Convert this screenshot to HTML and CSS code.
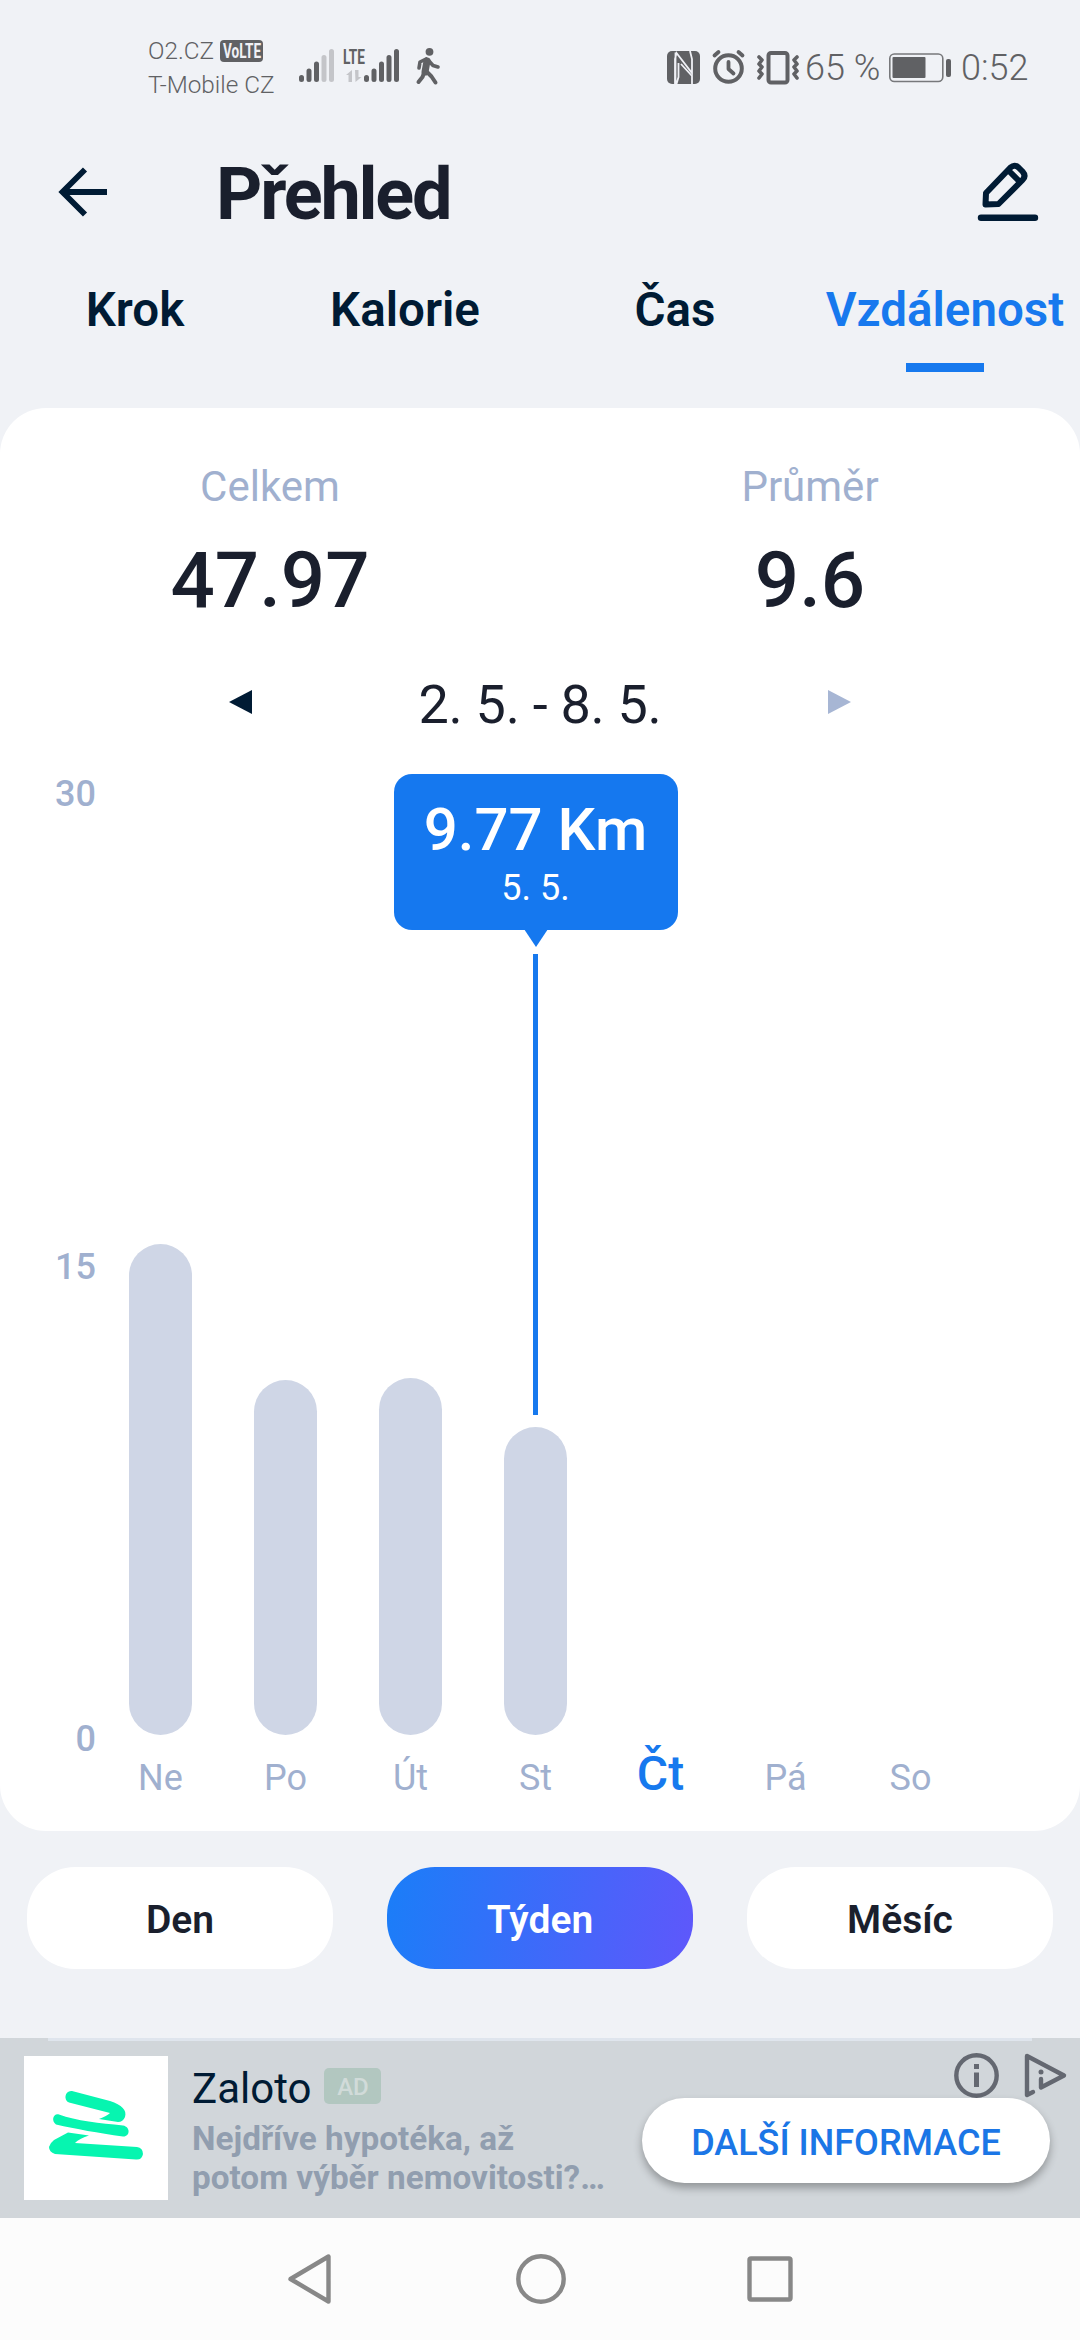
FILE: index.html
```html
<!DOCTYPE html>
<html lang="cs">
<head>
    <meta charset="UTF-8">
    <meta name="viewport" content="width=device-width, initial-scale=1.0">
    <title>Přehled</title>
    <link rel="stylesheet" href="styles.css">
</head>
<body>
    <!-- Status bar -->
    <div class="status-bar">
        <div class="carriers">
            <p>O2.CZ <span class="volte"><svg width="38" height="22" viewBox="0 0 38 22"><text x="0" y="18" textLength="38" lengthAdjust="spacingAndGlyphs">VoLTE</text></svg></span></p>
            <p>T-Mobile CZ</p>
        </div>
        <svg class="signals" width="146" height="42" viewBox="298 44 146 42">
            <g stroke="#606164" stroke-width="5" stroke-linecap="round">
                <path d="M301.5 77.5v2M309 71v8.500M316.500 64v15.500"/>
                <path d="M324 57.500v22M331.500 51.500v28" stroke="#c4c5c9"/>
                <path d="M366.500 77.500v2M374 71v8.500M381.500 64v15.500M389 57.500v22M396.500 51.500v28"/>
            </g>
            <text class="lte" x="343" y="64" textLength="22" lengthAdjust="spacingAndGlyphs">LTE</text>
            <path d="M346 75l6-5v12h-3.500v-7zM355 70h3.500v7h3l-6 5z" fill="#c4c5c9"/>
            <circle cx="429.500" cy="51.800" r="3.900" fill="#606164"/>
            <g fill="none" stroke="#606164" stroke-linecap="round" stroke-linejoin="round">
                <path d="M427 61l-2 11" stroke-width="7"/>
                <path d="M426 59l-6 3-1 6M429 61l4 4.500 5 1.500" stroke-width="3.600"/>
                <path d="M424 73l-1.500 4-4 5M427 72l4.500 4.500 4 6" stroke-width="4"/>
            </g>
        </svg>
        <div class="status-right">
            <svg width="136" height="38" viewBox="665 48 136 38">
                <rect x="666" y="50" width="33" height="33" rx="5" fill="#606164"/>
                <path d="M674 83V58l1.500-6L691 72V58l-2-8M674.500 51.500v28l1 4M677.500 62v14l-2 7M680 63l11 12v8" fill="none" stroke="#f0f1f6" stroke-width="1.800"/>
                <g fill="none" stroke="#606164" stroke-width="4" stroke-linecap="round" stroke-linejoin="round">
                    <circle cx="727.500" cy="67.500" r="13.300"/>
                    <path d="M727.500 61v7l5 4.500M713.500 54.500l4-3.500M741.500 54.500l-4-3.500" stroke-width="3.800"/>
                    <rect x="767.500" y="52" width="19" height="29.500" rx="2.500"/>
                    <path d="M758 56l3 3-3 4 3 3-3 4 3 3-3 4M796 56l-3 3 3 4-3 3 3 4-3 3 3 4" stroke-width="3.600"/>
                </g>
            </svg>
            <span class="percent">65 %</span>
            <svg class="battery" width="62" height="30" viewBox="0 0 62 30">
                <rect x=".8" y="1" width="53" height="27.500" rx="4.500" fill="none" stroke="#77787b" stroke-width="1.600"/>
                <rect x="3.500" y="4" width="33" height="21" rx="1" fill="#606164"/>
                <rect x="57" y="6" width="5" height="18" rx="2" fill="#606164"/>
            </svg>
            <span class="clock">0:52</span>
        </div>
    </div>

    <!-- Header -->
    <div class="header">
        <svg class="back" width="50" height="50" viewBox="0 0 50 50"><path d="M26 2.500L3.500 25 26 47.500M4 25h44" fill="none" stroke="#001b34" stroke-width="5.800"/></svg>
        <h1>Přehled</h1>
        <svg class="edit" width="60" height="60" viewBox="978 162 60 60">
            <g fill="none" stroke="#001b34" stroke-linecap="round" stroke-linejoin="round">
                <path d="M985.500 204.500l.5-11.500L1010.500 167.500q4-3.500 8 0l4 4q4 4.500 0 8.500L998.500 204zM1008.500 170.500l10.500 10.500" stroke-width="6"/>
                <path d="M981 217.800h54" stroke-width="6.400"/>
            </g>
        </svg>
    </div>

    <div class="tabs">
        <div class="tab">Krok</div>
        <div class="tab">Kalorie</div>
        <div class="tab">Čas</div>
        <div class="tab active">Vzdálenost</div>
    </div>

    <!-- Chart card -->
    <div class="card">
        <div class="totals">
            <div class="total">
                <p class="label">Celkem</p>
                <p class="value">47.97</p>
            </div>
            <div class="total">
                <p class="label">Průměr</p>
                <p class="value">9.6</p>
            </div>
        </div>
        <div class="period">
            <svg width="23" height="24" viewBox="0 0 23 24"><path d="M23 0v24L0 12z" fill="#001b34"/></svg>
            <span>2. 5. - 8. 5.</span>
            <svg width="23" height="24" viewBox="0 0 23 24"><path d="M0 0v24l23-12z" fill="#a7b6d4"/></svg>
        </div>
        <div class="chart">
            <div class="axis">
                <span>30</span>
                <span>15</span>
                <span>0</span>
            </div>
            <div class="plot">
                <div class="bars">
                    <div class="col"><div class="bar" style="height: 491.5px"></div></div>
                    <div class="col"><div class="bar" style="height: 355px"></div></div>
                    <div class="col"><div class="bar" style="height: 357.5px"></div></div>
                    <div class="col">
                        <div class="tooltip">
                            <p class="km">9.77 Km</p>
                            <p class="date">5. 5.</p>
                        </div>
                        <div class="pointer"></div>
                        <div class="bar" style="height: 308px"></div>
                    </div>
                    <div class="col"></div>
                    <div class="col"></div>
                    <div class="col"></div>
                </div>
                <div class="days">
                    <span>Ne</span>
                    <span>Po</span>
                    <span>Út</span>
                    <span>St</span>
                    <span class="today">Čt</span>
                    <span>Pá</span>
                    <span>So</span>
                </div>
            </div>
        </div>
    </div>

    <div class="ranges">
        <button class="range">Den</button>
        <button class="range selected">Týden</button>
        <button class="range">Měsíc</button>
    </div>

    <!-- Ad banner -->
    <div class="ad">
        <svg class="ad-logo" width="144" height="144" viewBox="0 0 144 144">
            <rect width="144" height="144" fill="#fff"/>
            <g fill="#06f5b0">
                <path d="M48 35L86 45C98 49 103 54 101 61Q99 66 94 66L75 63Q83 60 86 57L45 46.500C39 44 41 34 48 35Z"/>
                <path d="M35 58.500C52 65 76 67 99 69.500C107 71 106 81 99 80.500C74 77 52 73 32 68.500C27 65 29 57 35 58.500Z"/>
                <path d="M44 76.500L65 79.500Q56 82 51 87L113 91Q119 92 119 98 118 104 112 103.500L31 98Q25 96 25 91 26 87 30 84Z"/>
            </g>
        </svg>
        <div class="ad-text">
            <div class="ad-title">Zaloto <span class="ad-badge">AD</span></div>
            <p>Nejdříve hypotéka, až<br>potom výběr nemovitosti?…</p>
        </div>
        <div class="ad-side">
            <svg class="ad-icons" width="112" height="46" viewBox="954 2053 112 46">
                <g fill="none" stroke="#646871" stroke-width="4.400" stroke-linejoin="round" stroke-linecap="round">
                    <circle cx="976.500" cy="2075.500" r="20.200"/>
                    <path d="M1033 2092l-6 3v-39l37 19.500-23 12V2079"/>
                </g>
                <path d="M974 2064h5v5h-5zM974 2072.500h5V2087h-5z" fill="#646871"/>
                <circle cx="1041" cy="2072" r="2.500" fill="#646871"/>
            </svg>
            <button class="cta">DALŠÍ INFORMACE</button>
        </div>
    </div>

    <!-- Android navigation -->
    <div class="nav-bar">
        <svg width="508" height="54" viewBox="285 2252 508 54">
            <g fill="none" stroke="#888" stroke-width="4.400" stroke-linejoin="round">
                <path d="M289.500 2279l38-22.500v45z"/>
                <circle cx="540" cy="2279" r="22.700"/>
                <rect x="748.500" y="2258.500" width="41" height="41" rx="1.500"/>
            </g>
        </svg>
    </div>
</body>
</html>
```
FILE: styles.css
```css
/* Basic reset */
* {
    margin: 0;
    padding: 0;
    box-sizing: border-box;
}

body {
    font-family: Roboto, sans-serif;
    background-color: #f0f2f6;
    color: #1a1f2d;
    width: 1080px;
    height: 2340px;
    display: flex;
    flex-direction: column;
    overflow: hidden;
}

svg {
    display: block;
    flex-shrink: 0;
    overflow: visible;
}

button {
    border: none;
    font-family: inherit;
}

/* Status bar */
.status-bar {
    display: flex;
    height: 130px;
    padding: 34px 50px 0 148px;
    color: #606164;
}

.carriers {
    width: 150px;
    font-size: 24.3px;
    font-weight: 300;
    line-height: 34px;
    white-space: nowrap;
}

.carriers p {
    display: flex;
    align-items: center;
    gap: 6px;
}

.volte {
    height: 22px;
    padding: 0 2.5px;
    border-radius: 4px;
    background-color: #606164;
}

.volte text {
    font-size: 20px;
    font-weight: 700;
    fill: #f0f1f6;
}

.signals {
    margin-top: 10px;
}

.lte {
    font-size: 21px;
    font-weight: 700;
    fill: #606164;
}

.status-right {
    display: flex;
    align-items: center;
    height: 68px;
    margin-left: auto;
    font-size: 36px;
    font-weight: 300;
}

.percent {
    width: 84px;
    margin-left: 3px;
    white-space: nowrap;
}

.battery {
    margin-right: 10px;
}

.clock {
    width: 69px;
    white-space: nowrap;
}

/* Header */
.header {
    display: flex;
    align-items: center;
    height: 124px;
    padding: 0 42px 0 59px;
}

.header h1 {
    font-size: 72px;
    font-weight: 700;
    letter-spacing: -2.2px;
    line-height: 84px;
    margin-left: 107px;
    padding-top: 5px;
}

.edit {
    margin-left: auto;
}

/* Tabs */
.tabs {
    display: flex;
    height: 154px;
    padding-top: 28px;
}

.tab {
    width: 270px;
    font-size: 47.5px;
    font-weight: 600;
    line-height: 56px;
    text-align: center;
    color: #001b34;
}

.tab.active {
    color: #1779ee;
}

.tab.active::after {
    content: "";
    display: block;
    width: 78px;
    height: 9px;
    margin: 25px auto 0;
    background-color: #1779ee;
}

/* Card */
.card {
    height: 1423px;
    padding-top: 54px;
    background-color: #fff;
    border-radius: 46px;
}

.totals {
    display: flex;
}

.total {
    flex: 1;
    text-align: center;
}

.label {
    font-size: 42px;
    line-height: 50px;
    color: #a0b0cf;
}

.value {
    font-size: 78px;
    font-weight: 500;
    line-height: 90px;
    margin-top: 24px;
}

.period {
    display: flex;
    justify-content: space-between;
    margin-top: 49px;
    padding: 0 229px;
    font-size: 54px;
    letter-spacing: -0.3px;
    line-height: 60px;
}

.period svg {
    margin-top: 15px;
}

/* Chart */
.chart {
    display: flex;
    margin-top: 39px;
}

.axis {
    display: flex;
    flex-direction: column;
    justify-content: space-between;
    width: 98px;
    height: 985px;
    padding-right: 2px;
    text-align: right;
    font-size: 36px;
    font-weight: 500;
    line-height: 40px;
    color: #a0b0cf;
}

.bars {
    display: flex;
    align-items: stretch;
    height: 961px;
}

.col {
    position: relative;
    display: flex;
    align-items: flex-end;
    justify-content: center;
    width: 125px;
}

.bar {
    width: 62.5px;
    background-color: #cfd6e6;
    border-radius: 32px;
}

.tooltip {
    position: absolute;
    top: 0;
    left: 50%;
    transform: translateX(-50%);
    width: 284px;
    height: 156px;
    padding-top: 21px;
    border-radius: 18px;
    background-color: #1578ef;
    color: #fff;
    text-align: center;
    white-space: nowrap;
}

.tooltip::after {
    content: "";
    position: absolute;
    top: 155px;
    left: 130px;
    border: 12px solid transparent;
    border-top: 18px solid #1578ef;
    border-bottom: 0;
}

.km {
    font-size: 60px;
    font-weight: 500;
    line-height: 70px;
}

.date {
    font-size: 36px;
    line-height: 46px;
}

.pointer {
    position: absolute;
    top: 180px;
    left: 60px;
    width: 5px;
    height: 461px;
    background-color: #1779ee;
}

.days {
    display: flex;
    align-items: baseline;
    margin-top: 17px;
    font-size: 36px;
    line-height: 44px;
    color: #a0b0cf;
}

.days span {
    width: 125px;
    text-align: center;
}

.days .today {
    font-size: 48px;
    font-weight: 500;
    color: #1779ee;
}

/* Range buttons */
.ranges {
    display: flex;
    gap: 54px;
    margin-top: 36px;
    padding: 0 27px;
}

.range {
    flex: 1;
    height: 102px;
    padding-top: 3px;
    border-radius: 48px;
    background-color: #fff;
    color: #1a1f2d;
    font-size: 39px;
    font-weight: 600;
}

.range.selected {
    background: linear-gradient(100deg, #1a7ef8, #5f57fb);
    color: #fff;
}

/* Ad banner */
.ad {
    position: relative;
    display: flex;
    height: 180px;
    margin-top: 69px;
    padding: 0 30px 0 24px;
    background-color: #d1d6da;
}

.ad::before {
    content: "";
    position: absolute;
    top: 0;
    left: 48px;
    right: 48px;
    height: 3px;
    background-color: #dfe5ed;
}

.ad-logo {
    margin-top: 18px;
}

.ad-text {
    padding: 26px 0 0 24px;
    font-size: 33.3px;
    font-weight: 700;
    line-height: 39px;
    color: #919eaf;
    white-space: nowrap;
}

.ad-title {
    display: flex;
    align-items: center;
    gap: 13px;
    margin-bottom: 5px;
    font-size: 42px;
    font-weight: 400;
    line-height: 50px;
    color: #001b34;
}

.ad-badge {
    width: 57px;
    height: 36px;
    margin-bottom: 6px;
    border-radius: 5px;
    background-color: #b2c7c0;
    color: #d1dbd9;
    font-size: 24px;
    font-weight: 500;
    line-height: 38px;
    text-align: center;
}

.ad-side {
    display: flex;
    flex-direction: column;
    align-items: flex-end;
    margin-left: auto;
    padding-top: 15px;
}

.ad-icons {
    margin-right: -16px;
}

.cta {
    width: 408px;
    height: 85px;
    margin-top: -1px;
    padding-top: 4px;
    border-radius: 43px;
    background-color: #fff;
    box-shadow: 0 5px 8px rgba(0, 0, 0, 0.3);
    color: #1b76e6;
    font-size: 36px;
    font-weight: 500;
}

/* Navigation bar */
.nav-bar {
    flex: 1;
    display: flex;
    justify-content: center;
    align-items: center;
    background-color: #fcfcfc;
}
```
